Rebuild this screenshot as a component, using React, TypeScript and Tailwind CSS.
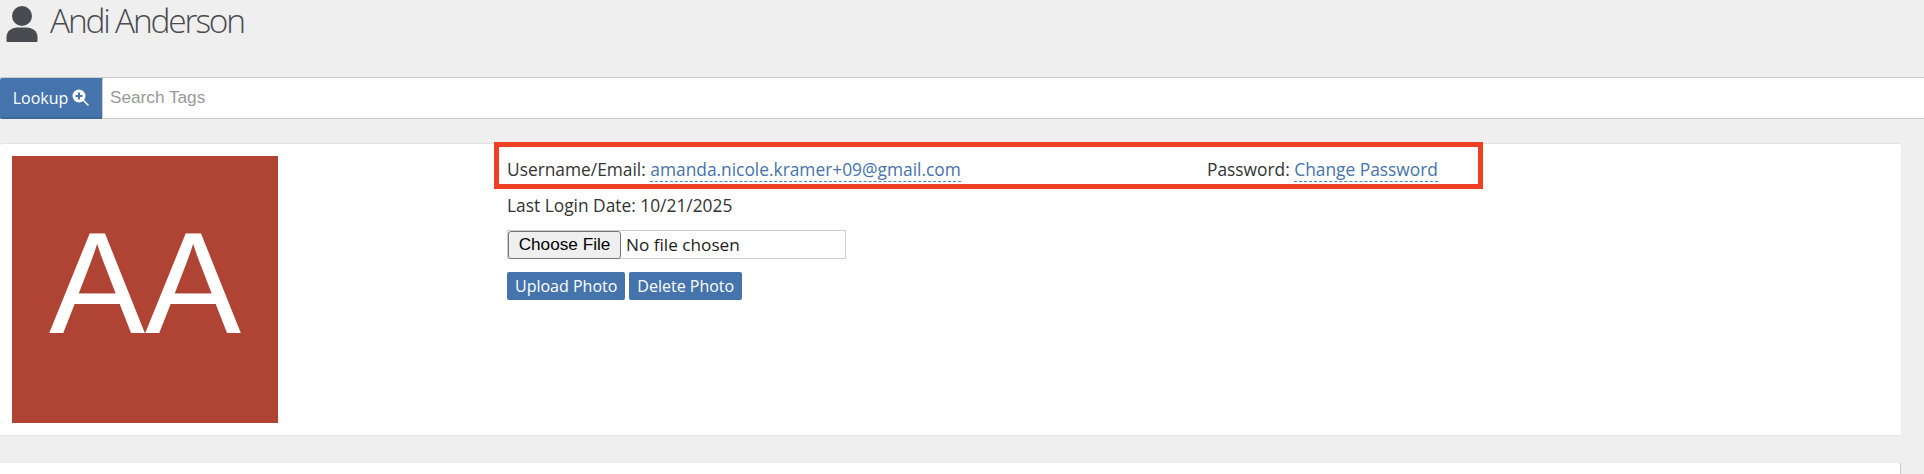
import React from "react";

function UserIcon() {
  return (
    <svg width="32" height="37" viewBox="0 0 32 37" className="shrink-0 fill-[#4a4b50]">
      <circle cx="16" cy="11" r="10" />
      <path d="M0.5 36 V32 C0.5 26 6 22.5 11 22.5 H21 C26 22.5 31.5 26 31.5 32 V36 C31.5 36.8 31 37 30 37 H2 C1 37 0.5 36.8 0.5 36 Z" />
    </svg>
  );
}

function SearchPlus() {
  return (
    <svg width="17" height="17" viewBox="0 0 17 17" className="shrink-0">
      <circle cx="7" cy="7" r="6.5" fill="#fff" />
      <path d="M7 3.6 V10.4 M3.6 7 H10.4" stroke="#4573ab" strokeWidth="2" />
      <path d="M11.5 11.5 L16 16" stroke="#fff" strokeWidth="1.6" strokeLinecap="round" />
    </svg>
  );
}

export default function App() {
  return (
    <div className="h-[474px] overflow-hidden bg-[#efefef] font-['Open_Sans',sans-serif] text-[17.35px] text-[#333333]">
      <div className="flex h-[77px] items-start gap-[12px] pl-[6px] pt-[5px]">
        <UserIcon />
        <h1 className="-mt-[5px] pr-[6px] text-[33.5px] font-light leading-[40px] tracking-[-2.2px] text-[#4a4b50]">Andi Anderson</h1>
      </div>

      <div className="flex h-[42px] border-y border-[#cccccc] bg-white">
        <button className="flex h-[41px] w-[102px] shrink-0 items-center justify-center gap-[4px] rounded-l-[2px] border-b-2 border-[#3d6797] bg-[#4573ab] text-[16px] text-white">
          Lookup <SearchPlus />
        </button>
        <div className="flex w-full items-center border-l border-[#cccccc] pl-[7px] font-['Liberation_Sans',sans-serif] text-[17.2px] text-[#999999]">
          Search Tags
        </div>
      </div>

      <div className="mr-[23px] mt-[24px] flex h-[293px] rounded-[3px] border-y border-[#e3e3e3] bg-white pl-[12px] pt-[12px]">
        <div className="flex h-[267px] w-[266px] shrink-0 items-center justify-center bg-[#af4434] pb-[12px] font-['Liberation_Sans',sans-serif] text-[144px] leading-none text-white">
          AA
        </div>
        <div className="ml-[216px] -mt-[14px] w-[989px]">
          <div className="flex h-[47px] items-center border-[5px] border-[#f04023] pl-[8px] pt-[8px]">
            <div className="w-[700px]">
              Username/Email:{" "}
              <a className="border-b border-dashed border-[#428bca] text-[#4573ab]">amanda.nicole.kramer+09@gmail.com</a>
            </div>
            <div>
              Password: <a className="border-b border-dashed border-[#428bca] text-[#4573ab]">Change Password</a>
            </div>
          </div>
          <div className="mt-[4px] pl-[13px] leading-[24px]">Last Login Date: 10/21/2025</div>
          <div className="ml-[13px] mt-[13px] flex h-[29px] w-[339px] items-center border border-[#cccccc]">
            <span className="flex h-[28px] w-[113px] items-center justify-center rounded-[3px] border border-[#767676] bg-[#efefef] font-['Liberation_Sans',sans-serif] text-[17.2px] text-black">
              Choose File
            </span>
            <span className="ml-[5px] text-[#222222] text-[17.2px]">No file chosen</span>
          </div>
          <div className="ml-[13px] mt-[13px] flex gap-[4px]">
            <button className="h-[28px] rounded-[2px] bg-[#4573ab] px-[8px] text-[16px] text-white">Upload Photo</button>
            <button className="h-[28px] rounded-[2px] bg-[#4573ab] px-[8px] text-[16px] text-white">Delete Photo</button>
          </div>
        </div>
      </div>

      <div className="mr-[23px] mt-[27px] h-[20px] border-r border-[#cccccc] bg-white" />
    </div>
  );
}
